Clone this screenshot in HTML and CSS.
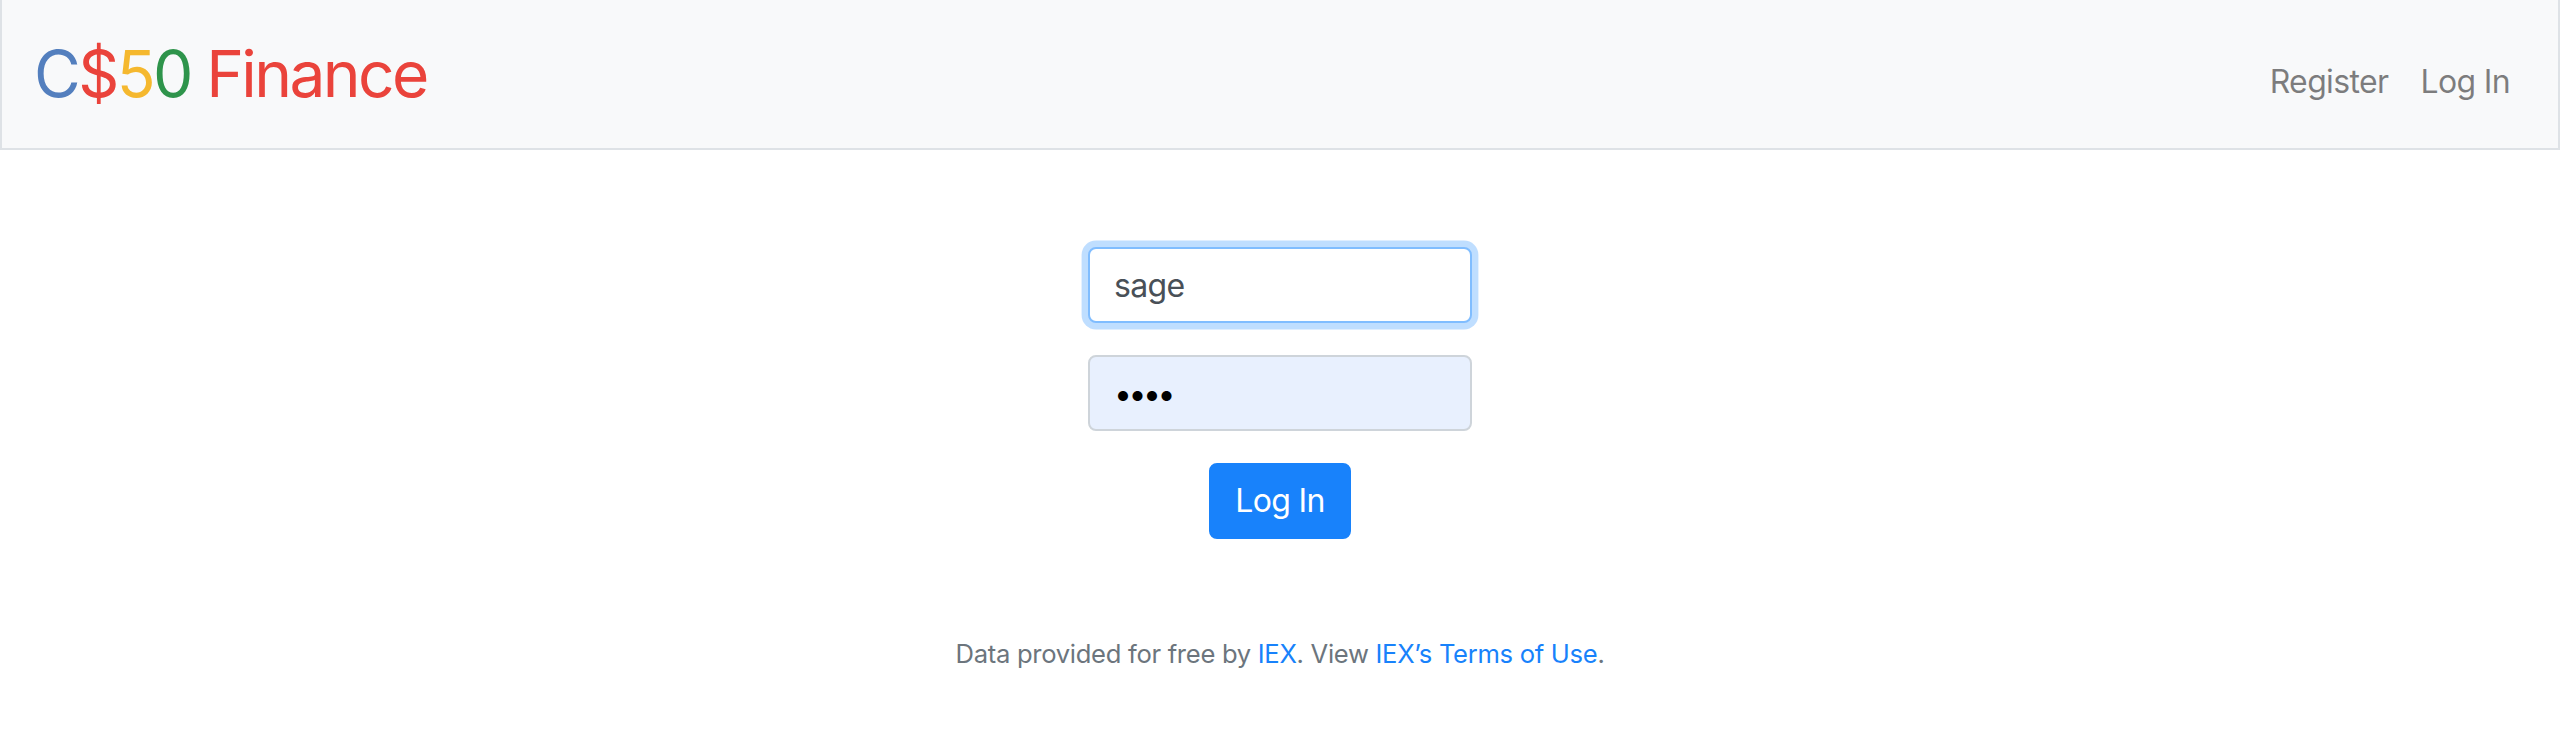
FILE: index.html
```html
<!DOCTYPE html>
<html lang="en">
<head>
<meta charset="utf-8">
<title>C$50 Finance: Log In</title>
<link rel="stylesheet" href="styles.css">
</head>
<body>
<nav class="navbar">
  <a class="brand" href="#"><span class="blue">C</span><span class="red">$</span><span class="yellow">5</span><span class="green">0</span> <span class="red">Finance</span></a>
  <ul class="nav-links">
    <li><a class="nav-link" href="#">Register</a></li>
    <li><a class="nav-link" href="#">Log In</a></li>
  </ul>
</nav>
<main class="main">
  <form class="login-form" action="#" method="post">
    <div class="form-group">
      <input class="form-control focused" type="text" name="username" value="sage" placeholder="Username">
    </div>
    <div class="form-group">
      <input class="form-control autofilled" type="password" name="password" value="sage" placeholder="Password">
    </div>
    <button class="btn-primary" type="submit">Log In</button>
  </form>
</main>
<footer class="footer">
  Data provided for free by <a href="#">IEX</a>. View <a href="#">IEX’s Terms of Use</a>.
</footer>
</body>
</html>
```
FILE: styles.css
```css
* {
  box-sizing: border-box;
}

html, body {
  margin: 0;
  padding: 0;
  background: #ffffff;
}

body {
  font-family: Inter, "Liberation Sans", sans-serif;
  font-size: 32px;
  line-height: 1.5;
  color: #212529;
  letter-spacing: -0.64px;
}

a {
  text-decoration: none;
}

.navbar {
  display: flex;
  align-items: center;
  justify-content: space-between;
  height: 150px;
  padding: 16px 32px;
  background: #f8f9fa;
  border: 2px solid #dee2e6;
  border-top: none;
}

.brand {
  display: inline-block;
  font-size: 64px;
  line-height: 1.5;
  padding: 10px 0;
  white-space: nowrap;
  letter-spacing: -2.6px;
}

.blue { color: #537fbe; }
.red { color: #ea433b; }
.yellow { color: #f5b82e; }
.green { color: #2e944b; }

.nav-links {
  display: flex;
  list-style: none;
  margin: 16px 0 0 0;
  padding: 0;
}

.nav-link {
  display: block;
  padding: 16px;
  color: rgba(0, 0, 0, 0.5);
}

.main {
  padding: 97px 0 96px;
  text-align: center;
}

.login-form {
  margin: 0;
}

.form-group {
  margin-bottom: 32px;
}

.form-control {
  display: block;
  width: 384px;
  height: 76px;
  margin: 0 auto;
  padding: 12px 24px;
  font-family: inherit;
  font-size: 32px;
  line-height: 1.5;
  letter-spacing: -0.64px;
  color: #495057;
  background: #ffffff;
  border: 2px solid #ced4da;
  border-radius: 8px;
  outline: none;
}

.form-control.focused {
  border-color: #80bdff;
  box-shadow: 0 0 0 6.4px rgba(0, 123, 255, 0.25);
}

.form-control.autofilled {
  background: #e8f0fe;
  color: #000000;
  letter-spacing: -3.5px;
}

.btn-primary {
  display: inline-block;
  padding: 12px 24px;
  font-family: inherit;
  font-size: 32px;
  line-height: 1.5;
  letter-spacing: -0.64px;
  color: #ffffff;
  background: #1882fb;
  border: 2px solid #1882fb;
  border-radius: 8px;
  cursor: pointer;
}

.footer {
  margin-bottom: 96px;
  font-size: 25.6px;
  line-height: 1.5;
  letter-spacing: -0.3px;
  text-align: center;
  color: #6c757d;
}

.footer a {
  color: #1882fb;
}
```
